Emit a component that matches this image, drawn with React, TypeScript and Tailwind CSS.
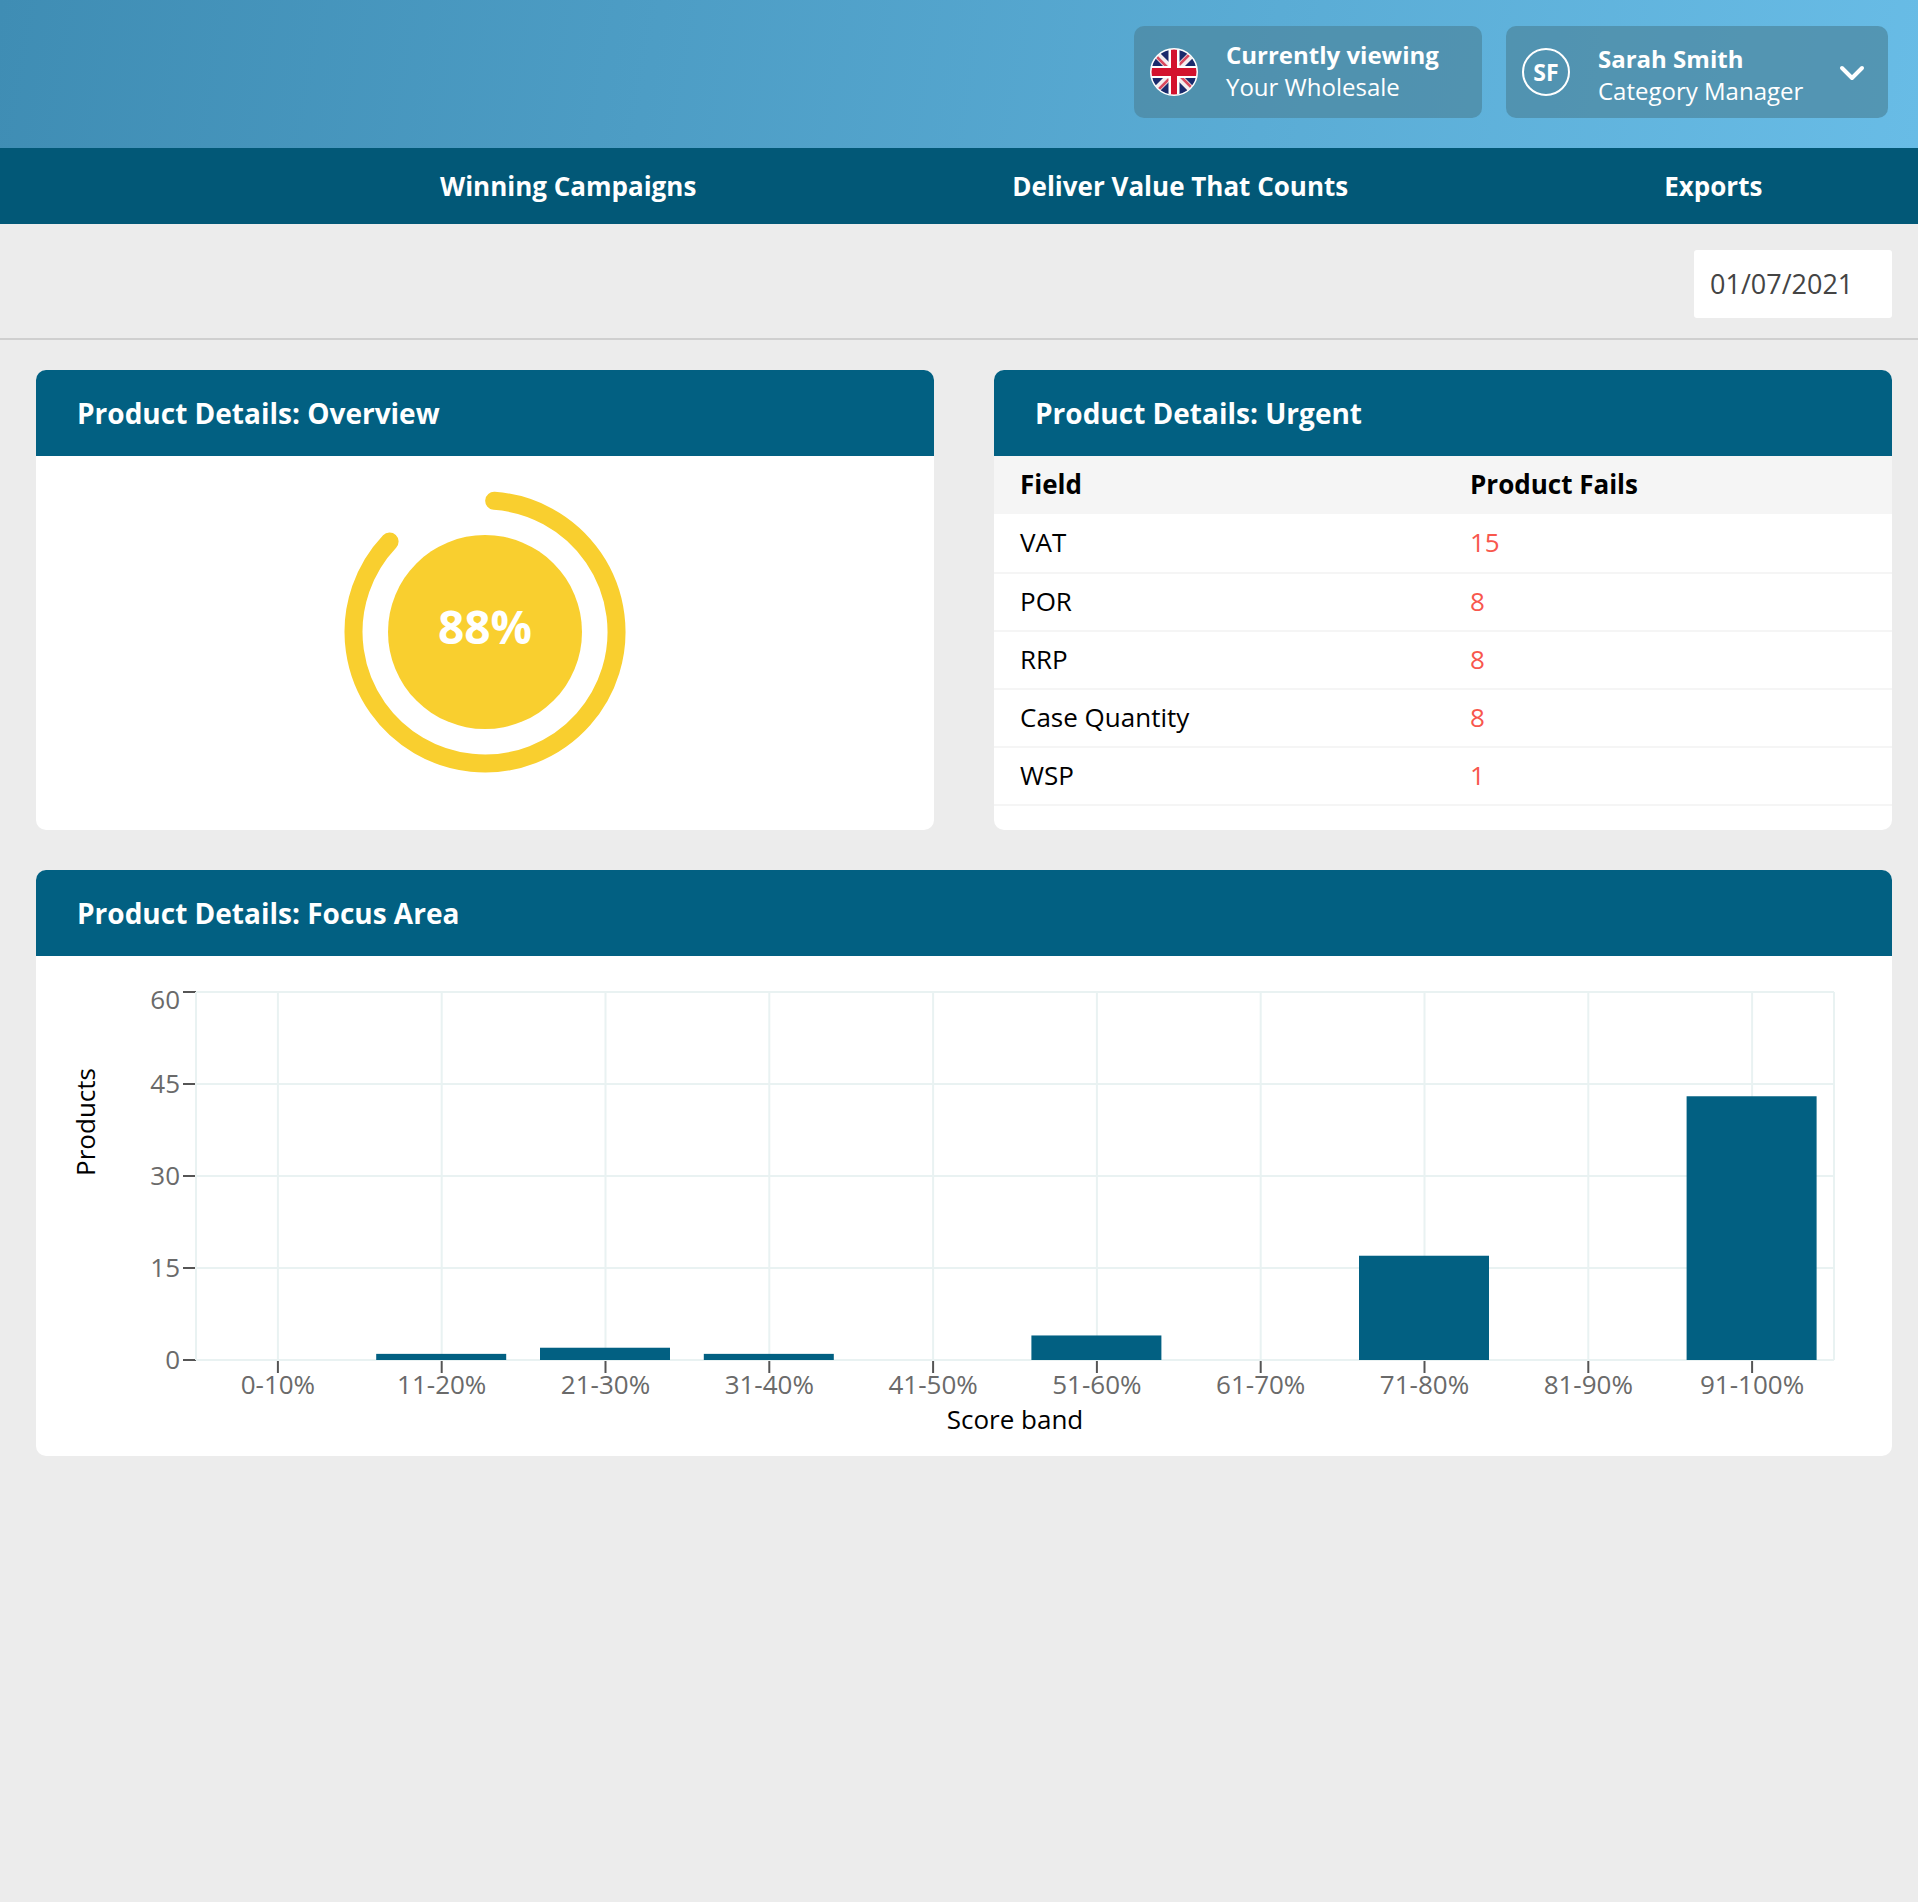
const columns = ["0-10%", "11-20%", "21-30%", "31-40%", "41-50%", "51-60%", "61-70%", "71-80%", "81-90%", "91-100%"];
const counts = [0, 1, 2, 1, 0, 4, 0, 17, 0, 43];
const yTicks = [0, 15, 30, 45, 60];
const fails = [
  { field: "VAT", value: 15 },
  { field: "POR", value: 8 },
  { field: "RRP", value: 8 },
  { field: "Case Quantity", value: 8 },
  { field: "WSP", value: 1 },
];

// plot area inside the chart svg
const plotLeft = 160;
const plotRight = 1798;
const plotTop = 36;
const plotBottom = 404;
const step = (plotRight - plotLeft) / 10;
const unit = (plotBottom - plotTop) / 60;

function UkFlag() {
  return (
    <svg width="48" height="48" viewBox="0 0 48 48" className="shrink-0">
      <defs>
        <clipPath id="flagClip">
          <circle cx="24" cy="24" r="23" />
        </clipPath>
      </defs>
      <g clipPath="url(#flagClip)">
        <rect width="48" height="48" fill="#1a2a6c" />
        <path d="M0 0 L48 48 M48 0 L0 48" stroke="#f4eef0" strokeWidth="7" />
        <path d="M6 8 L18 20 M40 6 L29 17 M8 42 L19 31 M42 40 L30 28" stroke="#d9495f" strokeWidth="2.5" />
        <rect x="18.5" width="11" height="48" fill="#fff" />
        <rect y="18" width="48" height="12" fill="#fff" />
        <rect x="21" width="6" height="48" fill="#d3122e" />
        <rect y="20" width="48" height="8" fill="#d3122e" />
      </g>
      <circle cx="24" cy="24" r="23.25" fill="none" stroke="#fff" strokeWidth="1.5" />
    </svg>
  );
}

function Card({ title, children, className }: { title: string; children: React.ReactNode; className?: string }) {
  return (
    <section className={`bg-white rounded-[10px] overflow-hidden ${className ?? ""}`}>
      <h2 className="bg-[#026082] h-[86px] flex items-center pl-[41px] text-white text-[28px] font-bold">{title}</h2>
      {children}
    </section>
  );
}

function Gauge() {
  return (
    <svg width="300" height="300" viewBox="0 0 300 300" className="block mx-auto mt-[26px]">
      <path
        d="M159.2 18.8 A131.5 131.5 0 1 1 54.6 59.5"
        fill="none"
        stroke="#f9cf2f"
        strokeWidth="18"
        strokeLinecap="round"
      />
      <circle cx="150" cy="150" r="97" fill="#f9cf2f" />
      <text x="150" y="162" textAnchor="middle" fill="#fff" fontSize="46" fontWeight="700">
        88%
      </text>
    </svg>
  );
}

function FocusChart() {
  return (
    <svg width="1856" height="500" viewBox="0 0 1856 500" className="block">
      {yTicks.map((t) => (
        <g key={t}>
          <line x1={plotLeft} x2={plotRight} y1={plotBottom - t * unit} y2={plotBottom - t * unit} stroke="#e9f2f2" strokeWidth="2" />
          <line x1={plotLeft - 13} x2={plotLeft} y1={plotBottom - t * unit} y2={plotBottom - t * unit} stroke="#555" strokeWidth="2" />
          <text
            x={plotLeft - 16}
            y={plotBottom - t * unit + (t === 60 ? 17 : 9)}
            textAnchor="end"
            fill="#6a6a6a"
            fontSize="26"
          >
            {t}
          </text>
        </g>
      ))}
      <line x1={plotLeft} x2={plotLeft} y1={plotTop} y2={plotBottom} stroke="#e9f2f2" strokeWidth="2" />
      <line x1={plotRight} x2={plotRight} y1={plotTop} y2={plotBottom} stroke="#e9f2f2" strokeWidth="2" />
      {columns.map((label, i) => {
        const cx = plotLeft + step * (i + 0.5);
        return (
          <g key={label}>
            <line x1={cx} x2={cx} y1={plotTop} y2={plotBottom} stroke="#e9f2f2" strokeWidth="2" />
            {counts[i] > 0 && (
              <rect
                x={cx - 65.5}
                y={plotBottom - counts[i] * unit}
                width={130}
                height={counts[i] * unit}
                fill="#026082"
              />
            )}
            <line x1={cx} x2={cx} y1={plotBottom + 1} y2={plotBottom + 13} stroke="#555" strokeWidth="2" />
            <text x={cx} y={plotBottom + 34} textAnchor="middle" fill="#6a6a6a" fontSize="26">
              {label}
            </text>
          </g>
        );
      })}
      <text x="979" y="473" textAnchor="middle" fill="#000" fontSize="26">
        Score band
      </text>
      <text transform="translate(59 166) rotate(-90)" textAnchor="middle" fill="#000" fontSize="26">
        Products
      </text>
    </svg>
  );
}

export default function App() {
  return (
    <div className="min-h-[1902px] bg-[#ececec] font-['Open_Sans',sans-serif]">
      <header className="h-[148px] bg-[linear-gradient(100deg,#3f8db4,#68bce6)] flex justify-end items-start pt-[26px] pr-[30px] gap-[24px]">
        <div className="w-[348px] h-[92px] rounded-[10px] bg-[#4b869e]/70 flex items-center pl-[16px] text-white">
          <UkFlag />
          <div className="ml-[28px] -mt-[2px]">
            <div className="text-[24px] leading-[32px] font-bold">Currently viewing</div>
            <div className="text-[24px] leading-[32px]">Your Wholesale</div>
          </div>
        </div>
        <div className="w-[382px] h-[92px] rounded-[10px] bg-[#4b869e]/70 flex items-center pl-[16px] text-white">
          <div className="w-[48px] h-[48px] rounded-full border-2 border-white flex items-center justify-center text-[23px] font-bold shrink-0">
            SF
          </div>
          <div className="ml-[28px] mt-[6px]">
            <div className="text-[24px] leading-[32px] font-bold">Sarah Smith</div>
            <div className="text-[24px] leading-[32px]">Category Manager</div>
          </div>
          <svg width="26" height="16" viewBox="0 0 26 16" className="ml-auto mr-[23px] mt-[2px]">
            <path d="M3 3 L13 13 L23 3" fill="none" stroke="#fff" strokeWidth="4" strokeLinecap="round" strokeLinejoin="round" />
          </svg>
        </div>
      </header>

      <nav className="h-[76px] bg-[#025877] flex items-center pl-[440px] gap-[316px] text-white text-[26px] font-bold">
        <a>Winning Campaigns</a>
        <a>Deliver Value That Counts</a>
        <a>Exports</a>
      </nav>

      <div className="h-[116px] border-b-2 border-[#cfcfcf] flex justify-end items-start pt-[26px] pr-[26px]">
        <div className="w-[198px] h-[68px] bg-white rounded-[3px] flex items-center pl-[16px] text-[27px] text-[#444]">
          01/07/2021
        </div>
      </div>

      <main className="pl-[36px] pr-[26px] pt-[30px]">
        <div className="grid grid-cols-2 gap-[60px]">
          <Card title="Product Details: Overview" className="h-[460px]">
            <Gauge />
          </Card>
          <Card title="Product Details: Urgent" className="h-[460px]">
            <table className="w-full text-[26px] text-black">
              <thead>
                <tr className="bg-[#f5f5f5] h-[58px] text-left">
                  <th className="pl-[26px] pb-[2px] w-[476px] font-bold">Field</th>
                  <th className="pb-[2px] font-bold">Product Fails</th>
                </tr>
              </thead>
              <tbody>
                {fails.map((row) => (
                  <tr key={row.field} className="h-[58px] border-b-2 border-[#f5f5f5] first:h-[59px]">
                    <td className="pl-[26px] pb-[1px]">{row.field}</td>
                    <td className="pb-[1px] text-[#f8574d]">{row.value}</td>
                  </tr>
                ))}
              </tbody>
            </table>
          </Card>
        </div>
        <Card title="Product Details: Focus Area" className="mt-[40px]">
          <FocusChart />
        </Card>
      </main>
    </div>
  );
}
